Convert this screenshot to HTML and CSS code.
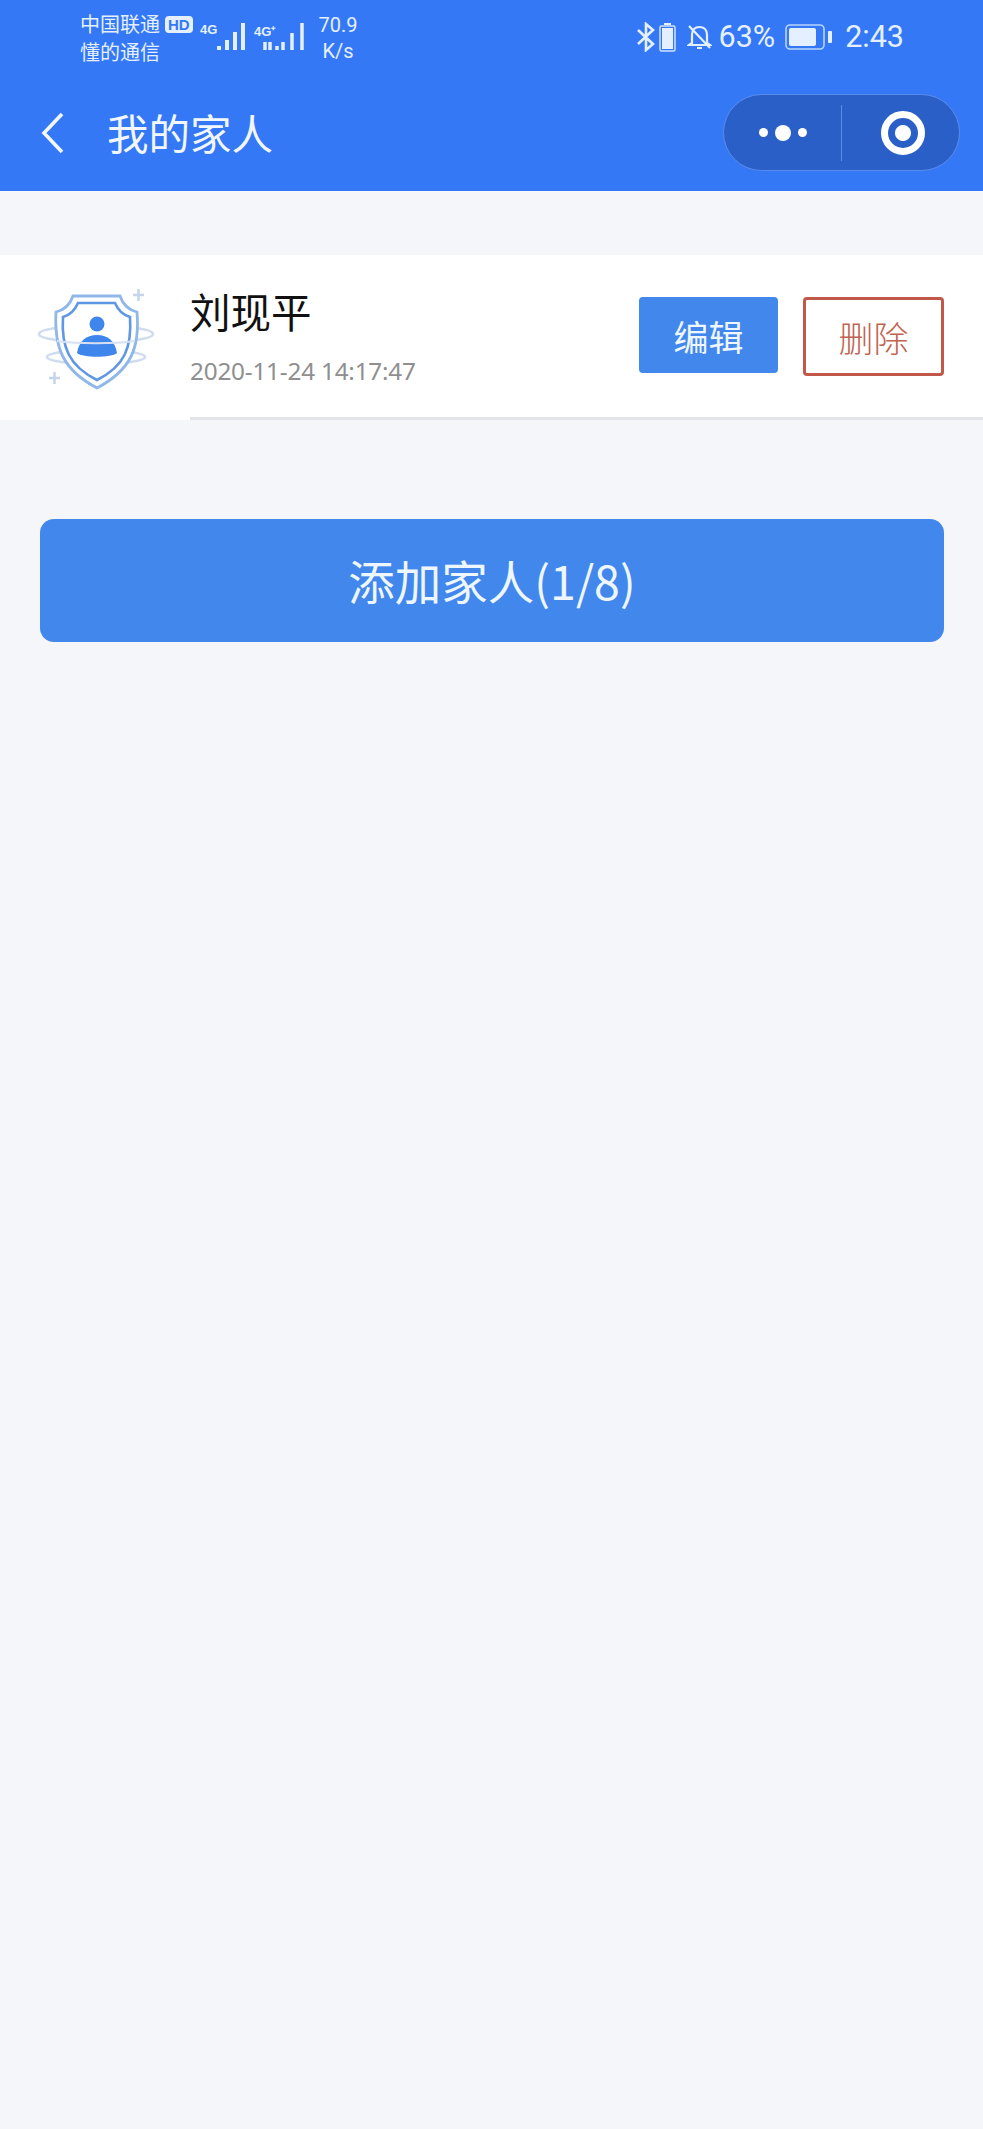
FILE: index.html
```html
<!DOCTYPE html>
<html lang="zh-CN">
<head>
    <meta charset="UTF-8">
    <meta name="viewport" content="width=device-width, initial-scale=1.0">
    <title>我的家人</title>
    <link rel="stylesheet" href="styles.css">
</head>
<body>
    <div class="header">
        <div class="status-bar">
            <div class="carrier">
                <div class="carrier-line">中国联通<span class="hd">HD</span></div>
                <div class="carrier-line">懂的通信</div>
            </div>
            <div class="signal signal-first">
                <span class="net-label">4G</span>
                <svg width="30" height="28" viewBox="0 0 30 28"><path d="M3 24v4M11 18v10M19 10v18M27 1v27" stroke="#e4f0ff" stroke-width="4"/></svg>
            </div>
            <div class="signal signal-second">
                <span class="net-label">4G⁺</span>
                <svg width="42" height="28" viewBox="0 0 42 28"><path d="M3 20v8M8 28v-8M15 24v4M21 20v8M30 11v17M40 1v27" stroke="#e4f0ff" stroke-width="3.500"/></svg>
            </div>
            <div class="speed">70.9<br>K/s</div>
            <div class="status-right">
                <svg width="20" height="30" viewBox="0 0 20 30"><path d="M2 8l15 14-7 6V2l7 6L2 22" fill="none" stroke="#e4f0ff" stroke-width="2.600"/></svg>
                <svg class="small-batt" width="17" height="30" viewBox="0 0 17 30"><path d="M5 1h7v2H5z" fill="#e4f0ff"/><rect x="1" y="4" width="15" height="25" rx="1.500" fill="none" stroke="#cfe2ff" stroke-width="1.500"/><rect x="3" y="6" width="11" height="21" fill="#e4f0ff"/></svg>
                <svg class="bell" width="25" height="28" viewBox="0 0 25 28"><path d="M5 20V12c0-5 3-8 7.500-8S20 7 20 12v8l3 2H2zM10 25h5M2 3l21 22" fill="none" stroke="#e4f0ff" stroke-width="2.200"/></svg>
                <span class="percent">63%</span>
                <svg class="big-batt" width="48" height="26" viewBox="0 0 48 26"><rect x="1" y="1" width="38" height="24" rx="4" fill="none" stroke="#b9d4ff" stroke-width="1.600"/><rect x="4" y="4" width="27" height="18" rx="2" fill="#e4f0ff"/><rect x="43" y="7" width="4" height="12" rx="1" fill="#e4f0ff"/></svg>
                <span class="time">2:43</span>
            </div>
        </div>
        <div class="nav-bar">
            <svg class="back" width="24" height="42" viewBox="0 0 24 42"><path d="M21 2L3 21l18 19" fill="none" stroke="#f2f7ff" stroke-width="3.600"/></svg>
            <div class="nav-title">我的家人</div>
            <div class="capsule">
                <div class="capsule-more"><span class="dot"></span><span class="dot dot-big"></span><span class="dot"></span></div>
                <div class="capsule-close"><span class="target"></span></div>
            </div>
        </div>
    </div>

    <div class="member">
        <div class="member-avatar">
            <svg width="120" height="110" viewBox="0 0 120 110">
                <ellipse cx="59" cy="45" rx="57" ry="8.500" fill="none" stroke="#cfdcee" stroke-width="2.500"/>
                <ellipse cx="59" cy="68" rx="49" ry="7" fill="none" stroke="#cfdcee" stroke-width="2.500"/>
                <path d="M36 7h47c3 9 9 14 17 16 3 36-6 58-40 76C26 81 17 59 19 23c8-2 14-7 17-16z" fill="#fff" stroke="#8fb7ea" stroke-width="2.800"/>
                <path d="M41 14h37c3 7 8 12 15 14 2 30-5 49-33 63C32 77 24 58 26 28c7-2 12-7 15-14z" fill="#fff" stroke="#5f97e4" stroke-width="2.600"/>
                <circle cx="60" cy="35" r="7.500" fill="#3e86ec"/>
                <path d="M40 64c2-12 9-18 20-18s18 6 20 18c-6 5-34 5-40 0z" fill="#3e86ec"/>
                <path d="M20 52c20 3 58 3 78 0" fill="none" stroke="#d5e1f2" stroke-width="2"/>
                <path d="M96 6h11M101.500 0v12M12 89h11M17.500 83v12" stroke="#c5d5ea" stroke-width="2.500"/>
            </svg>
        </div>
        <div class="member-main">
            <div class="member-info">
                <div class="member-name">刘现平</div>
                <div class="member-date">2020-11-24 14:17:47</div>
            </div>
            <div class="member-actions">
                <div class="btn-edit">编辑</div>
                <div class="btn-delete">删除</div>
            </div>
        </div>
    </div>

    <div class="add-wrap">
        <div class="btn-add">添加家人(1/8)</div>
    </div>
</body>
</html>
```

FILE: styles.css
```css
* {
    box-sizing: border-box;
}
body {
    margin: 0;
    min-height: 2129px;
    background: #f5f6fa;
    font-family: "Noto Sans CJK SC", "Noto Sans", sans-serif;
}
.header {
    height: 191px;
    background: #3478f6;
    color: #f2f7ff;
}
.status-bar {
    display: flex;
    align-items: flex-start;
    height: 94px;
    padding: 10px 0 0 80px;
    color: #e4f0ff;
}
.carrier {
    width: 120px;
    font-size: 20px;
    line-height: 28px;
}
.carrier-line {
    display: flex;
    align-items: center;
    white-space: nowrap;
}
.hd {
    margin-left: 5px;
    padding: 0 3px;
    background: #e4f0ff;
    color: #3478f6;
    border-radius: 4px;
    font-family: "Liberation Sans", sans-serif;
    font-size: 15px;
    font-weight: bold;
    line-height: 17px;
}
.signal {
    position: relative;
    display: flex;
    align-items: flex-end;
    justify-content: flex-end;
    height: 30px;
    margin-top: 10px;
    font-family: "Liberation Sans", sans-serif;
}
.signal-first {
    width: 46px;
}
.signal-second {
    width: 50px;
    margin-left: 8px;
}
.net-label {
    position: absolute;
    left: 0;
    top: 2px;
    font-size: 13px;
    font-weight: bold;
}
.speed {
    width: 50px;
    margin-left: 9px;
    margin-top: 2px;
    font-family: "Roboto", sans-serif;
    font-size: 20px;
    line-height: 26px;
    text-align: center;
}
.status-right {
    display: flex;
    align-items: center;
    margin-left: auto;
    margin-right: 79px;
    height: 37px;
    margin-top: 8px;
    font-family: "Roboto", sans-serif;
    font-size: 30.500px;
}
.small-batt {
    margin-left: 3px;
}
.bell {
    margin-left: 11px;
}
.percent {
    margin-left: 7px;
}
.big-batt {
    margin-left: 10px;
}
.time {
    margin-left: 12px;
}
.nav-bar {
    display: flex;
    align-items: center;
    height: 77px;
    padding: 0 23px 0 41px;
}
.nav-title {
    flex: 1;
    margin-left: 42px;
    font-size: 41.500px;
    line-height: 77px;
}
.capsule {
    display: flex;
    align-items: center;
    width: 237px;
    height: 77px;
    background: #2a5fc8;
    border: 1.500px solid #5b8ceb;
    border-radius: 39px;
}
.capsule-more {
    display: flex;
    align-items: center;
    justify-content: center;
    gap: 7px;
    width: 118px;
    height: 56px;
    border-right: 1px solid #5b8ceb;
}
.dot {
    width: 9px;
    height: 9px;
    border-radius: 50%;
    background: #fff;
}
.dot-big {
    width: 16px;
    height: 16px;
}
.capsule-close {
    display: flex;
    flex: 1;
    align-items: center;
    justify-content: center;
    padding-left: 4px;
}
.target {
    display: block;
    width: 44px;
    height: 44px;
    border: 7px solid #fff;
    border-radius: 50%;
    background: radial-gradient(circle, #fff 0 7.500px, #2a5fc8 8.500px);
}
.member {
    display: flex;
    margin-top: 64px;
    background: #fff;
}
.member-avatar {
    width: 190px;
    height: 165px;
    padding: 34px 0 0 37px;
}
.member-main {
    display: flex;
    flex: 1;
    align-items: flex-start;
    justify-content: space-between;
    height: 165px;
    border-bottom: 3px solid #e2e4e9;
}
.member-info {
    padding-top: 26px;
}
.member-name {
    color: #111;
    font-size: 40.500px;
    line-height: 60px;
}
.member-date {
    margin-top: 14px;
    color: #8f8f8f;
    font-family: "Noto Sans", sans-serif;
    font-size: 24.300px;
    line-height: 32px;
    letter-spacing: -0.2px;
    white-space: nowrap;
}
.member-actions {
    display: flex;
    gap: 25px;
    padding: 42px 39px 0 0;
}
.btn-edit,
.btn-delete {
    display: flex;
    align-items: center;
    justify-content: center;
    font-size: 35px;
    border-radius: 4px;
}
.btn-edit {
    width: 139px;
    height: 76px;
    background: #4287ec;
    color: #eef6ff;
}
.btn-delete {
    width: 141px;
    height: 79px;
    background: #fff;
    border: 3px solid #c0594a;
    color: #c0634f;
    font-weight: 300;
}
.add-wrap {
    padding: 99px 39px 0 40px;
}
.btn-add {
    display: flex;
    align-items: center;
    justify-content: center;
    height: 123px;
    padding-bottom: 2px;
    background: #4287ec;
    border-radius: 14px;
    color: #eef6ff;
    font-size: 46.500px;
}
```
